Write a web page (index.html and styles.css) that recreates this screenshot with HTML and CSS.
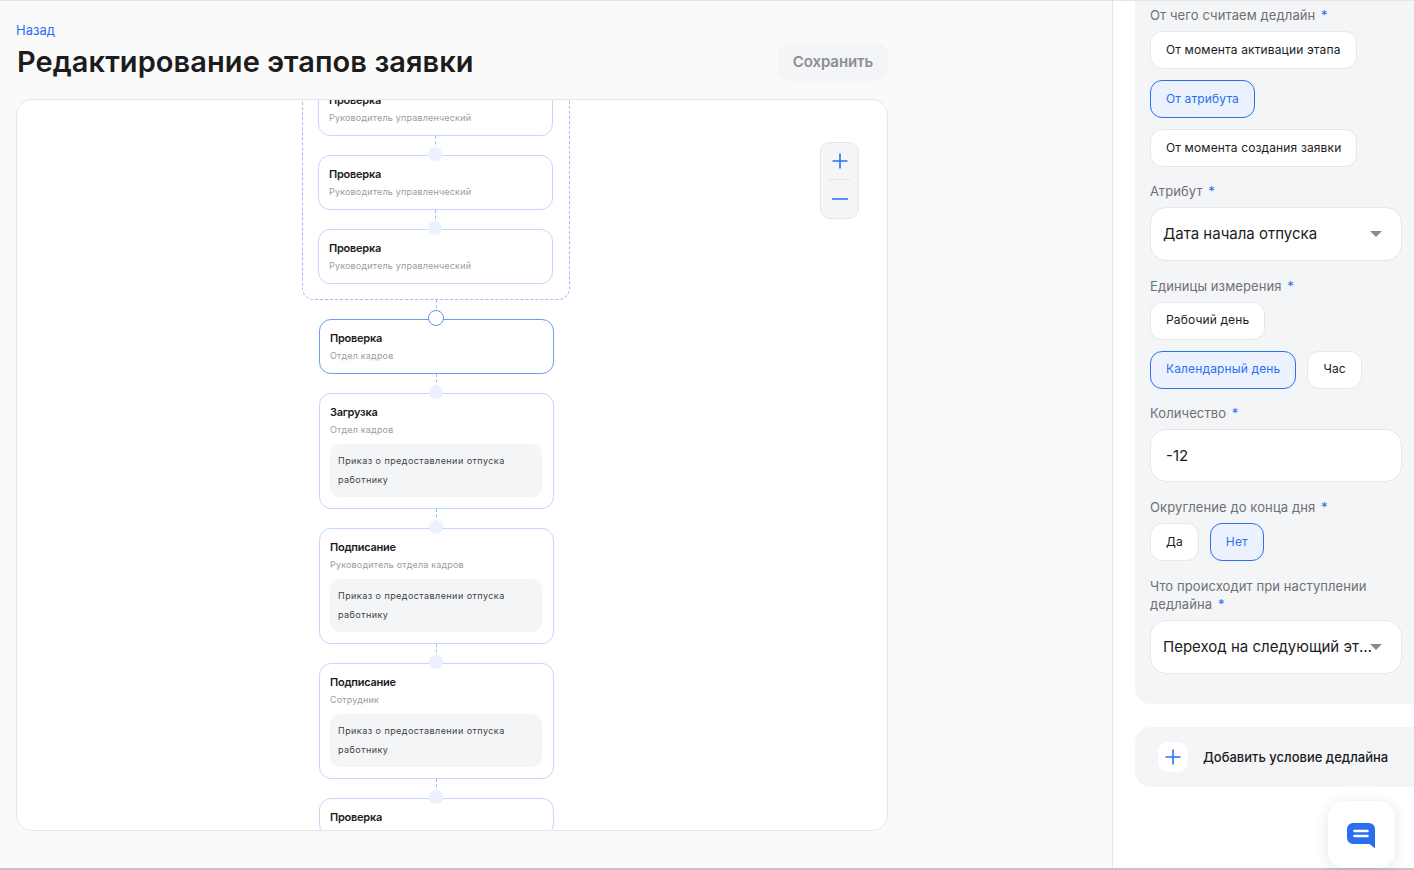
FILE: index.html
```html
<!DOCTYPE html>
<html lang="ru">
<head>
  <meta charset="UTF-8">
  <title>Редактирование этапов заявки</title>
  <link rel="stylesheet" href="styles.css">
</head>
<body>
  <div class="page">
    <main class="main">
      <a class="back" href="#">Назад</a>
      <div class="head">
        <h1>Редактирование этапов заявки</h1>
        <button class="save">Сохранить</button>
      </div>
      <div class="canvas">
        <div class="tree">
          <div class="group">
            <div class="card">
              <div class="card-title">Проверка</div>
              <div class="card-sub">Руководитель управленческий</div>
            </div>
            <div class="link"><span class="dot"></span></div>
            <div class="card">
              <div class="card-title">Проверка</div>
              <div class="card-sub">Руководитель управленческий</div>
            </div>
            <div class="link"><span class="dot"></span></div>
            <div class="card">
              <div class="card-title">Проверка</div>
              <div class="card-sub">Руководитель управленческий</div>
            </div>
          </div>
          <div class="link"><span class="dot dot-active"></span></div>
          <div class="card card-active">
            <div class="card-title">Проверка</div>
            <div class="card-sub">Отдел кадров</div>
          </div>
          <div class="link"><span class="dot"></span></div>
          <div class="card">
            <div class="card-title">Загрузка</div>
            <div class="card-sub">Отдел кадров</div>
            <div class="doc">Приказ о предоставлении отпуска работнику</div>
          </div>
          <div class="link"><span class="dot"></span></div>
          <div class="card">
            <div class="card-title">Подписание</div>
            <div class="card-sub">Руководитель отдела кадров</div>
            <div class="doc">Приказ о предоставлении отпуска работнику</div>
          </div>
          <div class="link"><span class="dot"></span></div>
          <div class="card">
            <div class="card-title">Подписание</div>
            <div class="card-sub">Сотрудник</div>
            <div class="doc">Приказ о предоставлении отпуска работнику</div>
          </div>
          <div class="link"><span class="dot"></span></div>
          <div class="card">
            <div class="card-title">Проверка</div>
          </div>
        </div>
        <div class="zoom">
          <button class="zoom-btn">
            <svg width="18" height="18" viewBox="0 0 18 18"><path d="M9 1.5v15M1.5 9h15" stroke="#2b6ff0" stroke-width="1.6" fill="none"/></svg>
          </button>
          <div class="zoom-line"></div>
          <button class="zoom-btn">
            <svg width="18" height="18" viewBox="0 0 18 18"><path d="M1 9h16" stroke="#2b6ff0" stroke-width="1.6" fill="none"/></svg>
          </button>
        </div>
      </div>
    </main>
    <aside class="side">
      <div class="panel">
        <div class="label">От чего считаем дедлайн <i>*</i></div>
        <div class="chips">
          <button class="chip">От момента активации этапа</button>
          <button class="chip chip-on">От атрибута</button>
          <button class="chip">От момента создания заявки</button>
        </div>
        <div class="label">Атрибут <i>*</i></div>
        <div class="select"><span class="select-text">Дата начала отпуска</span><span class="caret"></span></div>
        <div class="label">Единицы измерения <i>*</i></div>
        <div class="chips">
          <button class="chip">Рабочий день</button>
          <button class="chip chip-on">Календарный день</button>
          <button class="chip">Час</button>
        </div>
        <div class="label">Количество <i>*</i></div>
        <div class="select input">-12</div>
        <div class="label">Округление до конца дня <i>*</i></div>
        <div class="chips">
          <button class="chip">Да</button>
          <button class="chip chip-on">Нет</button>
        </div>
        <div class="label label-wrap">Что происходит при наступлении дедлайна <i>*</i></div>
        <div class="select"><span class="select-text">Переход на следующий этап</span><span class="caret"></span></div>
      </div>
      <div class="add">
        <span class="add-icon">
          <svg width="18" height="18" viewBox="0 0 18 18"><path d="M9 1.5v15M1.5 9h15" stroke="#2b6ff0" stroke-width="1.6" fill="none"/></svg>
        </span>
        Добавить условие дедлайна
      </div>
    </aside>
  </div>
  <button class="chat">
    <svg class="chat-icon" width="28" height="26" viewBox="0 0 28 26"><path d="M6 0h16a6 6 0 0 1 6 6v19.500l-5.500-4.500H6a6 6 0 0 1-6-6V6a6 6 0 0 1 6-6z" fill="#2b6ff0"/><path d="M7.500 8h13M7.500 13h13" stroke="#fff" stroke-width="2.600" stroke-linecap="round"/></svg>
  </button>
</body>
</html>
```

FILE: styles.css
```css
:root {
  --blue: #2b6ff0;
  --blue-line: #c3d8fb;
  --blue-soft: #ebf2fe;
  --gris: #f4f5f7;
  --borde: #e6e7ea;
  --texto: #1c1c1e;
  --label: #6d7076;
}
html, body {
  height: 100%;
  margin: 0;
  padding: 0;
  font-family: 'Inter', 'Liberation Sans', sans-serif;
  color: var(--texto);
  background: #fff;
  overflow: hidden;
}
button {
  font-family: inherit;
  cursor: pointer;
}
.page {
  display: flex;
  height: 867px;
  border-top: 1px solid #e6e6e6;
  border-bottom: 2px solid #c4c4c4;
  overflow: hidden;
}
/* Columna izquierda */
.main {
  width: 1113px;
  flex: none;
  box-sizing: border-box;
  padding: 21px 224px 0 16px;
  background: #fafafa;
  border-right: 1px solid #e6e6e6;
}
.back {
  display: block;
  font-size: 13px;
  line-height: 16px;
  color: var(--blue);
  text-decoration: none;
}
.head {
  display: flex;
  align-items: center;
  justify-content: space-between;
  height: 38px;
  margin-top: 5px;
  margin-bottom: 18px;
}
h1 {
  margin: 0 0 0 1px;
  font-size: 29px;
  font-weight: 600;
  line-height: 38px;
  letter-spacing: 0.07px;
}
.save {
  width: 110px;
  height: 38px;
  padding: 0 0 2px 0;
  border: none;
  border-radius: 12px;
  background: var(--gris);
  color: #8b8e94;
  font-size: 15px;
  font-weight: 600;
  letter-spacing: -0.1px;
}
.canvas {
  position: relative;
  height: 732px;
  box-sizing: border-box;
  background: #fff;
  border: 1px solid var(--borde);
  border-radius: 16px;
  overflow: hidden;
}
/* Scroll del diagrama: el grupo empieza por encima del canvas */
.tree {
  width: 268px;
  margin: -39px 0 0 285px;
  display: flex;
  flex-direction: column;
  align-items: center;
}
.group {
  width: 268px;
  box-sizing: border-box;
  padding: 19px 17px 15px 15px;
  display: flex;
  flex-direction: column;
  align-items: center;
  border: 1px dashed #9dbdf5;
  border-radius: 12px;
}
.card {
  width: 235px;
  flex: none;
  box-sizing: border-box;
  padding: 11px 10.500px;
  background: #fff;
  border: 1px solid var(--blue-line);
  border-radius: 12px;
}
.card-active {
  border-color: #6d9cf2;
}
.card-title {
  font-size: 11px;
  font-weight: 600;
  line-height: 14px;
  letter-spacing: -0.25px;
}
.card-sub {
  margin-top: 4px;
  font-size: 9px;
  line-height: 13px;
  letter-spacing: 0.18px;
  color: #9a9ca1;
}
.doc {
  margin-top: 8px;
  padding: 8px;
  background: var(--gris);
  border-radius: 10px;
  font-size: 9px;
  line-height: 18.500px;
  letter-spacing: 0.45px;
  color: #3c3f44;
}
.link {
  position: relative;
  width: 0;
  height: 19px;
  flex: none;
  border-left: 1px dashed #9dbdf5;
}
.dot {
  position: absolute;
  left: -7.500px;
  bottom: -6px;
  width: 14px;
  height: 14px;
  border-radius: 50%;
  background: var(--blue-soft);
  z-index: 1;
}
.dot-active {
  left: -8.500px;
  bottom: -7px;
  background: #fff;
  border: 1px solid #5f93f0;
}
.zoom {
  position: absolute;
  top: 42px;
  right: 28px;
  width: 39px;
  height: 77px;
  box-sizing: border-box;
  display: flex;
  flex-direction: column;
  align-items: center;
  background: var(--gris);
  border: 1px solid var(--borde);
  border-radius: 10px;
}
.zoom-btn {
  display: flex;
  flex: 1;
  align-items: center;
  justify-content: center;
  width: 37px;
  padding: 0;
  border: none;
  background: none;
}
.zoom-btn:first-child {
  flex: none;
  height: 36px;
}
.zoom-line {
  width: 23px;
  height: 1px;
  flex: none;
  background: var(--borde);
}
/* Columna derecha */
.side {
  flex: 1;
  min-width: 0;
  padding-left: 22px;
}
.panel {
  padding: 5px 12px 14px 15px;
  background: var(--gris);
  border-radius: 0 0 0 16px;
}
.label {
  font-size: 13px;
  line-height: 18px;
  letter-spacing: 0.1px;
  color: var(--label);
  margin-bottom: 7px;
}
.label i {
  font-style: normal;
  color: var(--blue);
  margin-left: 2px;
}
.label-wrap {
  padding-top: 1px;
}
.chips {
  display: flex;
  flex-wrap: wrap;
  gap: 11px;
  margin-bottom: 15px;
}
.chip {
  height: 38px;
  padding: 0 15px 2px 15px;
  background: #fff;
  border: 1px solid var(--borde);
  border-radius: 12px;
  font-size: 12px;
  letter-spacing: 0.14px;
  color: var(--texto);
}
.chip-on {
  background: var(--blue-soft);
  border-color: var(--blue);
  color: var(--blue);
}
.select {
  display: flex;
  align-items: center;
  height: 53.500px;
  box-sizing: border-box;
  padding: 0 19px 0 12px;
  margin-bottom: 16px;
  background: #fff;
  border: 1px solid var(--borde);
  border-radius: 16px;
  font-size: 15px;
}
.input {
  padding-left: 15px;
}
.select-text {
  flex: 1;
  min-width: 0;
  white-space: nowrap;
  overflow: hidden;
  text-overflow: ellipsis;
}
.caret {
  flex: none;
  width: 0;
  height: 0;
  margin-left: -3px;
  border-left: 6px solid transparent;
  border-right: 6px solid transparent;
  border-top: 6px solid #8a8a8a;
}
.add {
  display: flex;
  align-items: center;
  gap: 15px;
  height: 60px;
  margin-top: 23px;
  padding-left: 23px;
  background: var(--gris);
  border-radius: 16px 0 0 16px;
  font-size: 13px;
  font-weight: 500;
}
.add-icon {
  display: flex;
  align-items: center;
  justify-content: center;
  width: 30px;
  height: 30px;
  background: #fff;
  border-radius: 10px;
}
.chat {
  position: absolute;
  left: 1328px;
  top: 801px;
  width: 67px;
  height: 67px;
  display: flex;
  align-items: center;
  justify-content: center;
  padding: 0;
  border: none;
  border-radius: 16px;
  background: #fff;
  box-shadow: 0 2px 14px rgba(30, 40, 70, 0.12);
}
.chat-icon {
  margin: 2px 1px 0 0;
}
```
